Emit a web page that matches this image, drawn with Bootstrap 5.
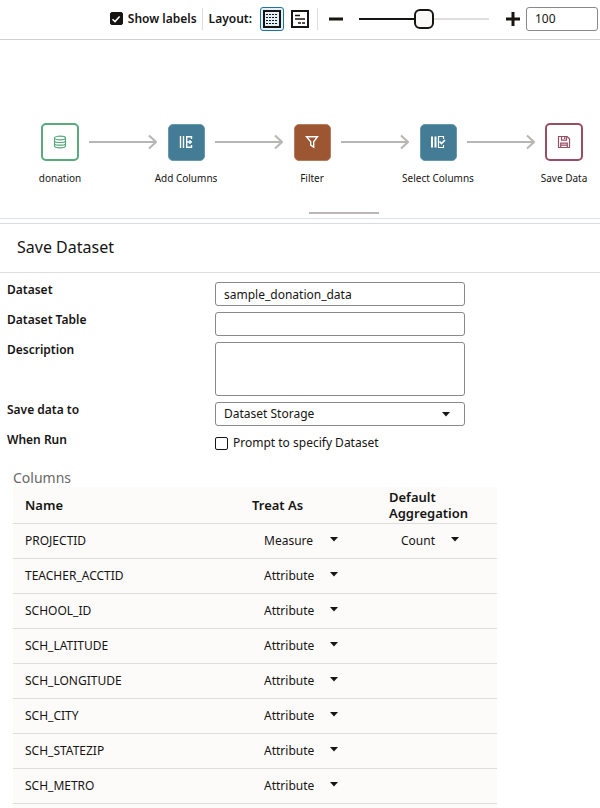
<!DOCTYPE html>
<html lang="en">
<head>
<meta charset="utf-8">
<meta name="viewport" content="width=device-width, initial-scale=1">
<title>Save Dataset</title>
<link href="https://cdn.jsdelivr.net/npm/bootstrap@5.3.0/dist/css/bootstrap.min.css" rel="stylesheet">
<style>
:root { --ink: #161513; --line: #dededd; --edge: #8b8885; }
body { font-family: "Noto Sans", "Open Sans", sans-serif; font-size: 12px; line-height: 16px; color: var(--ink); background: #fff; overflow-x: hidden; }
.toolbar { height: 40px; padding: 0 2px 2px 0; border-bottom: 1px solid #d0d0ce; }
.tick { width: 13px; height: 13px; margin: 0 5px 0 0; border: 1px solid var(--ink); border-radius: 2px; appearance: none; flex: none; background: #fff center/10px no-repeat; }
.tick:checked { background-color: var(--ink); background-image: url("data:image/svg+xml,%3Csvg xmlns='http://www.w3.org/2000/svg' viewBox='0 0 10 10'%3E%3Cpath d='M1.5 5.2 4 7.6 8.6 2.4' fill='none' stroke='%23fff' stroke-width='1.5'/%3E%3C/svg%3E"); }
.split { width: 1px; height: 22px; margin: 0 6px 0 5px; background: var(--line); }
.tool { width: 24px; height: 24px; padding: 0; border: 1px solid transparent; border-radius: 3px; background: none; display: flex; align-items: center; justify-content: center; flex: none; color: var(--ink); }
.tool.active { border-color: #22759a; background: #e4f1f7; }
.zoom-range { width: 130px; height: 20px; margin: 0 12px 0 11px; appearance: none; background: linear-gradient(90deg, var(--ink) 50%, #e0dfde 50%) center/100% 2px no-repeat; }
.zoom-range::-webkit-slider-thumb { appearance: none; width: 20px; height: 20px; border: 2px solid var(--ink); border-radius: 6px; background: #fbf9f8; }
.field { height: 24px; min-height: 24px; padding: 0 8px; border: 1px solid var(--edge); border-radius: 3px; font-size: 12px; line-height: 16px; color: var(--ink); }
.zoom-value { width: 72px; margin-left: 1px; }
.flow { padding: 83px 7px 27px 31px; }
.step { width: 58px; flex: none; display: grid; grid-template-columns: 100%; grid-template-rows: 38px auto; place-items: center; }
.step-label { font-size: 10px; line-height: 14px; margin-top: 10px; white-space: nowrap; }
.tile { width: 38px; height: 38px; border: 2px solid; border-radius: 5px; display: flex; align-items: center; justify-content: center; }
.tile-source { color: #59a97c; }
.tile-columns { background: #437c94; border: 1px solid #6799ad; }
.tile-filter { background: #9c5631; border: 1px solid #b57c5e; }
.tile-save { color: #994f63; }
.solid { width: 37px; height: 37px; color: #fff; }
.link-arrow { flex: none; width: 68px; height: 38px; }
.grip { width: 70px; height: 2px; background: #bcb6b8; margin-left: 88px; }
.panel-head { border-top: 1px solid #d8dedc; border-bottom: 1px solid var(--line); padding: 11px 17px 13px; }
.panel-head h1 { font-size: 16px; line-height: 24px; font-weight: 400; margin: 0; }
.panel-form { padding: 9px 7px 0; display: grid; grid-template-columns: 208px 250px; row-gap: 6px; }
.panel-form > label, .form-name { font-weight: 600; }
.panel-form textarea { height: 54px; min-height: 54px; resize: none; }
.check-line { padding-top: 3px; }
.picker { --bs-form-select-bg-img: url("data:image/svg+xml,%3Csvg xmlns='http://www.w3.org/2000/svg' viewBox='0 0 8 5'%3E%3Cpath d='M0 0h8L4 4.5z' fill='%23161513'/%3E%3C/svg%3E"); background-size: 8px 5px; }
.panel-form .picker { background-position: right 14px center; }
.columns-block { padding: 18px 13px 0; max-width: 510px; }
.columns-block h2 { font-size: 14px; line-height: 18px; font-weight: 400; color: #6b6866; margin: 0; }
.columns-table { --bs-table-bg: #fcfbfa; --bs-table-color: var(--ink); border-color: var(--line); table-layout: fixed; margin: 0; }
.columns-table > :not(caption) > * > * { padding: 1px 12px 0; height: 35px; vertical-align: middle; }
.columns-table > thead > tr > th { height: 36px; padding-top: 0; font-size: 13px; font-weight: 600; }
.col-name { width: 227px; }
.col-treat { width: 137px; }
.cell-select { width: 98px; height: 24px; min-height: 24px; padding: 0 0 0 12px; border: 0; font-size: 12px; line-height: 16px; background-color: transparent; background-position: 78px 8px; color: var(--ink); }
.cell-count { width: 84px; background-position: 62px 8px; }
</style>
<script src="https://cdn.jsdelivr.net/npm/bootstrap@5.3.0/dist/js/bootstrap.bundle.min.js"></script>
</head>
<body>
<header class="toolbar d-flex align-items-center justify-content-end">
  <input class="tick" type="checkbox" id="showLabels" checked>
  <label class="fw-semibold" for="showLabels">Show labels</label>
  <span class="split"></span>
  <span class="fw-semibold me-2">Layout:</span>
  <button class="tool active" type="button" aria-label="Grid layout">
    <svg width="18" height="18" viewBox="0 0 18 18" fill="none" stroke="currentColor"><rect x="1" y="1" width="16" height="16" stroke-width="2"/><path d="M3 4.500h12M3 7.500h12M3 10.500h12M3 13.500h12" stroke-dasharray="2 1"/></svg>
  </button>
  <button class="tool ms-1" type="button" aria-label="Tree layout">
    <svg width="18" height="18" viewBox="0 0 18 18" fill="none" stroke="currentColor" stroke-width="2"><rect x="1" y="1" width="16" height="16"/><path d="M4 5.500h5M4 9h10M7 13h3M11 13h3" stroke-width="1.500"/></svg>
  </button>
  <span class="split"></span>
  <button class="tool" type="button" aria-label="Zoom out"><svg width="14" height="14" viewBox="0 0 14 14"><path d="M0 7h14" stroke="currentColor" stroke-width="3"/></svg></button>
  <input class="zoom-range" type="range" min="0" max="200" value="100" aria-label="Zoom">
  <button class="tool" type="button" aria-label="Zoom in"><svg width="14" height="14" viewBox="0 0 14 14"><path d="M0 7h14M7 0v14" stroke="currentColor" stroke-width="3"/></svg></button>
  <input class="form-control field zoom-value" type="text" value="100" aria-label="Zoom percentage">
</header>

<main>
  <section class="flow d-flex" aria-label="Data flow">
    <div class="step">
      <div class="tile tile-source"><svg width="14" height="14" viewBox="0 0 14 14" fill="none" stroke="currentColor" stroke-width="1.200"><ellipse cx="7" cy="3" rx="5.500" ry="1.800"/><path d="M1.500 3v8c0 1 2.400 1.800 5.500 1.800s5.500-.8 5.500-1.800V3M1.500 5.700c0 1 2.400 1.800 5.500 1.800s5.500-.8 5.500-1.800M1.500 8.400c0 1 2.400 1.800 5.500 1.800s5.500-.8 5.500-1.800"/></svg></div>
      <div class="step-label">donation</div>
    </div>
    <svg class="link-arrow" viewBox="0 0 68 38" fill="none" stroke="#b8b6b5" stroke-width="2"><path d="M0 19h67M60 12.500l7 6.500-7 6.500"/></svg>
    <div class="step">
      <div class="tile solid tile-columns"><svg width="14" height="14" viewBox="0 0 14 14" fill="none" stroke="currentColor" stroke-width="1.400"><path d="M1.500 1v12M4.500 1v12M12.500 4V1.700H7.700v10.600h4.800V10M8 7h5M11 5v4"/></svg></div>
      <div class="step-label">Add Columns</div>
    </div>
    <svg class="link-arrow" viewBox="0 0 68 38" fill="none" stroke="#b8b6b5" stroke-width="2"><path d="M0 19h67M60 12.500l7 6.500-7 6.500"/></svg>
    <div class="step">
      <div class="tile solid tile-filter"><svg width="14" height="14" viewBox="0 0 14 14" fill="none" stroke="currentColor" stroke-width="1.400"><path d="M1.500 1.700h11L8.700 6.800v5.400l-3-2V6.800z"/></svg></div>
      <div class="step-label">Filter</div>
    </div>
    <svg class="link-arrow" viewBox="0 0 68 38" fill="none" stroke="#b8b6b5" stroke-width="2"><path d="M0 19h67M60 12.500l7 6.500-7 6.500"/></svg>
    <div class="step">
      <div class="tile solid tile-columns"><svg width="16" height="14" viewBox="0 0 16 14" fill="none" stroke="currentColor"><path d="M2 1.500v11M5.500 1.500v11" stroke-width="2"/><path d="M13.500 4V1.500h-5v11h5V10" stroke-width="1.200"/><path d="M9.500 6.500l2 2 3.500-3.500" stroke-width="1.700"/></svg></div>
      <div class="step-label">Select Columns</div>
    </div>
    <svg class="link-arrow" viewBox="0 0 68 38" fill="none" stroke="#b8b6b5" stroke-width="2"><path d="M0 19h67M60 12.500l7 6.500-7 6.500"/></svg>
    <div class="step">
      <div class="tile tile-save"><svg width="14" height="14" viewBox="0 0 14 14" fill="none" stroke="currentColor" stroke-width="1.200"><path d="M1.500 1.500h8.700l2.300 2.300v8.700h-11zM4.500 1.500v3.700h5V1.500M3.700 12.500V8.200h6.600v4.300M3.700 10.200h6.600M7.700 2v2"/></svg></div>
      <div class="step-label">Save Data</div>
    </div>
  </section>
  <div class="d-flex justify-content-center border-bottom pb-1"><span class="grip"></span></div>

  <section class="mt-1">
    <div class="panel-head"><h1>Save Dataset</h1></div>
    <form class="panel-form">
      <label for="dataset">Dataset</label>
      <input class="form-control field" id="dataset" type="text" value="sample_donation_data">
      <label for="datasetTable">Dataset Table</label>
      <input class="form-control field" id="datasetTable" type="text">
      <label for="description">Description</label>
      <textarea class="form-control field" id="description"></textarea>
      <label for="saveTo">Save data to</label>
      <select class="form-select field picker" id="saveTo"><option>Dataset Storage</option></select>
      <span class="form-name">When Run</span>
      <div class="check-line d-flex align-items-center">
        <input class="tick" type="checkbox" id="prompt">
        <label for="prompt">Prompt to specify Dataset</label>
      </div>
    </form>

    <div class="columns-block">
      <h2>Columns</h2>
      <table class="table columns-table">
        <thead><tr><th class="col-name" scope="col">Name</th><th class="col-treat" scope="col">Treat As</th><th scope="col">Default Aggregation</th></tr></thead>
        <tbody>
          <tr><td>PROJECTID</td><td><select class="form-select picker cell-select" aria-label="Treat PROJECTID as"><option>Measure</option></select></td><td><select class="form-select picker cell-select cell-count" aria-label="PROJECTID aggregation"><option>Count</option></select></td></tr>
          <tr><td>TEACHER_ACCTID</td><td><select class="form-select picker cell-select" aria-label="Treat TEACHER_ACCTID as"><option>Attribute</option></select></td><td></td></tr>
          <tr><td>SCHOOL_ID</td><td><select class="form-select picker cell-select" aria-label="Treat SCHOOL_ID as"><option>Attribute</option></select></td><td></td></tr>
          <tr><td>SCH_LATITUDE</td><td><select class="form-select picker cell-select" aria-label="Treat SCH_LATITUDE as"><option>Attribute</option></select></td><td></td></tr>
          <tr><td>SCH_LONGITUDE</td><td><select class="form-select picker cell-select" aria-label="Treat SCH_LONGITUDE as"><option>Attribute</option></select></td><td></td></tr>
          <tr><td>SCH_CITY</td><td><select class="form-select picker cell-select" aria-label="Treat SCH_CITY as"><option>Attribute</option></select></td><td></td></tr>
          <tr><td>SCH_STATEZIP</td><td><select class="form-select picker cell-select" aria-label="Treat SCH_STATEZIP as"><option>Attribute</option></select></td><td></td></tr>
          <tr><td>SCH_METRO</td><td><select class="form-select picker cell-select" aria-label="Treat SCH_METRO as"><option>Attribute</option></select></td><td></td></tr>
          <tr><td></td><td></td><td></td></tr>
        </tbody>
      </table>
    </div>
  </section>
</main>
</body>
</html>
